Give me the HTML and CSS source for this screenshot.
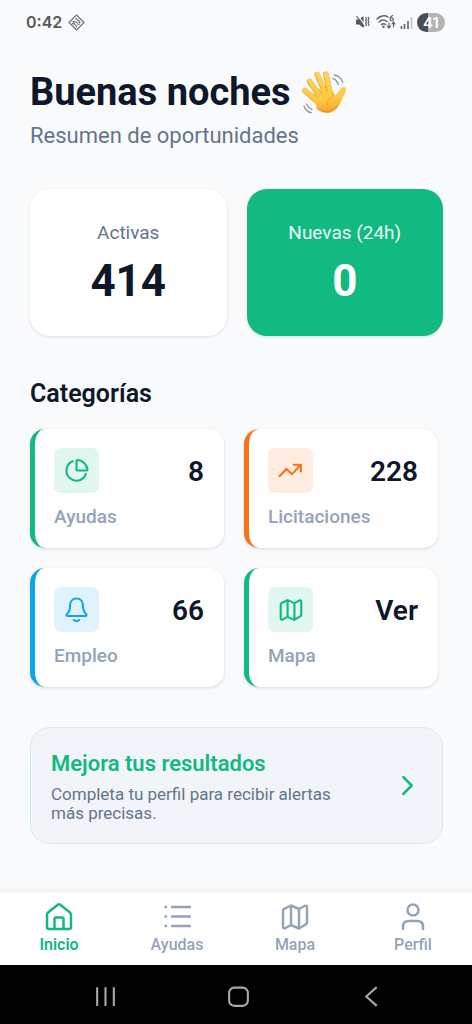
FILE: index.html
```html
<!DOCTYPE html>
<html lang="es">
<head>
<meta charset="utf-8">
<meta name="viewport" content="width=device-width, initial-scale=1">
<title>Resumen de oportunidades</title>
<link rel="stylesheet" href="styles.css">
</head>
<body>
<svg width="0" height="0" class="defs" aria-hidden="true">
  <symbol id="map" viewBox="0 0 28 28"><path d="M2 7.500q0-1 1-1.600L10 2.500l8 3.500 5.500-3Q26 2 26 4.500v15q0 1.200-1 1.700L18 25.500 10 22l-5.500 3Q2 26 2 23.500ZM10 2.500V22M18 6v19.500"/></symbol>
</svg>
<div class="screen">
  <header class="status">
    <span class="clock">0:42</span>
    <svg class="status-diamond" viewBox="0 0 17 17" aria-hidden="true"><path d="M8.500 1 16 8.500 8.500 16 1 8.500Z" fill="none" stroke="#747678" stroke-width="1.200" stroke-linejoin="round"/><path d="M8 4.500 9.500 6M5 7.500l2 .5M10.500 6.500 12 8.500M4.500 9.500 6.500 10M8 8l1.500 1M7.500 11l1 2M10 10.500l1.500-.5" stroke="#747678" stroke-width="1.300" stroke-linecap="round"/></svg>
    <div class="status-right">
      <svg class="mute" viewBox="0 0 14 14" aria-hidden="true"><path d="M.5 4.500h3L8 1v12L3.500 9.500h-3Z" fill="#58595b"/><path d="M2 0 9.500 10.500" stroke="#f8fafc" stroke-width="1.200"/><path d="m1 1 7.500 10.500M10 2l1 1.500-1 1.500 1 1.500-1 1.500 1 1.500-1 1.500M12.500 2l1 1.500-1 1.500 1 1.500-1 1.500 1 1.500-1 1.500" fill="none" stroke="#58595b" stroke-width="1.100"/></svg>
      <svg class="wifi" viewBox="0 0 20 16" aria-hidden="true"><g fill="none" stroke="#606163" stroke-width="1.500" stroke-linecap="round"><path d="M1 5C4 1.500 9 1 12 3M3 8c2.500-2.500 5.500-2.500 8-.5M5.500 10.500c1.300-1 2.800-1 4 0"/><path d="M16.500 1.500C14.500 2.500 14 4 14.300 5.300a1.500 1.500 0 1 0 1.200-1.500M13 9v4.500M11.500 12l1.500 2 1.500-2M17.500 13V8.500M16 10l1.500-2L19 10" stroke-width="1.200"/></g><circle cx="7.500" cy="12.700" r="1.200" fill="#606163"/></svg>
      <svg class="signal" viewBox="0 0 13 13" aria-hidden="true"><path d="M1.500 13v-3M4.500 13V8M8 13V5" stroke="#606163" stroke-width="1.600"/><path d="M11.500 13V1" stroke="#bfc1c4" stroke-width="1.600"/></svg>
      <span class="battery">41</span>
    </div>
  </header>

  <main class="content">
    <h1 class="title">Buenas noches
      <svg class="wave" viewBox="33 30 138 135" role="img" aria-label="Mano saludando">
        <defs><linearGradient id="skin" gradientUnits="userSpaceOnUse" x1="95" y1="35" x2="112" y2="160"><stop offset="0" stop-color="#ffd160"/><stop offset="0.650" stop-color="#ffca42"/><stop offset="1" stop-color="#f0a22d"/></linearGradient></defs>
        <g stroke-linecap="round" fill="none">
          <path d="M45 92 84 126M59 65l33 47M82 44l26 60M108 43l13 62" stroke="#eba730" stroke-width="17"/>
          <path d="M45 91 84 124M60 64l33 46M83 43l26 59M109 42l13 61" stroke="url(#skin)" stroke-width="14"/>
        </g>
        <path d="M70 112C78 98 95 86 112 84q14-2 18 10c2 10 6 15 10 8l12-16q6-8 13-4 6 4 2 12l-13 28c-6 16-16 28-28 34-18 8-36 0-46-14Z" fill="url(#skin)"/>
        <path d="m72 104 13 9M86 86l11 16M106 80l6 14M127 98c8 12-3 14-11 20q-7 7-5 17" fill="none" stroke="#e79b28" stroke-width="2.500" stroke-linecap="round"/>
        <path d="M78 144c22 20 48 12 63-7" fill="none" stroke="#e5942b" stroke-width="3" stroke-linecap="round"/>
        <path d="M129 55q13 6 16 19M133 45q20 4 25 22M49 132q6 12 17 17M42 138q6 18 22 20" fill="none" stroke="#8b9aa3" stroke-width="4" stroke-linecap="round"/>
      </svg>
    </h1>
    <p class="subtitle">Resumen de oportunidades</p>

    <section class="stats" aria-label="Resumen">
      <div class="stat"><span class="stat-label">Activas</span><strong class="stat-value">414</strong></div>
      <div class="stat stat-green"><span class="stat-label">Nuevas (24h)</span><strong class="stat-value">0</strong></div>
    </section>

    <h2 class="section-title">Categorías</h2>
    <section class="categories">
      <a class="card green" href="#ayudas">
        <span class="card-top"><span class="tile"><svg class="icon" viewBox="0 0 24 24"><path d="M8.500 3.200A9.600 9.600 0 1 0 21 15.300"/><path d="M12.800 2a.8.800 0 0 0-.8.800v8.400a.8.800 0 0 0 .8.800h8.900a.8.800 0 0 0 .8-.9A10 10 0 0 0 12.800 2Z"/></svg></span><strong class="card-value">8</strong></span>
        <span class="card-label">Ayudas</span>
      </a>
      <a class="card orange" href="#licitaciones">
        <span class="card-top"><span class="tile"><svg class="icon" viewBox="0 0 24 24"><path d="m1.500 17.500 6.500-7 5.500 5L21.500 7M15 6.500h7v6.500"/></svg></span><strong class="card-value">228</strong></span>
        <span class="card-label">Licitaciones</span>
      </a>
      <a class="card blue" href="#empleo">
        <span class="card-top"><span class="tile"><svg class="icon" viewBox="0 0 24 24"><path d="M12 1.500c-4 0-6.200 3-6.200 6.500 0 5-1.300 7-3 8.500-.8.800-.3 1.800.7 1.800h17c1 0 1.500-1 .7-1.800-1.700-1.500-3-3.500-3-8.500 0-3.500-2.200-6.500-6.200-6.500ZM9.500 22q2.500 2.200 5 0"/></svg></span><strong class="card-value">66</strong></span>
        <span class="card-label">Empleo</span>
      </a>
      <a class="card green" href="#mapa">
        <span class="card-top"><span class="tile"><svg class="icon icon-map"><use href="#map"/></svg></span><strong class="card-value">Ver</strong></span>
        <span class="card-label">Mapa</span>
      </a>
    </section>

    <a class="promo" href="#perfil">
      <span class="promo-text"><strong class="promo-title">Mejora tus resultados</strong><span class="promo-body">Completa tu perfil para recibir alertas más precisas.</span></span>
      <svg class="chevron" viewBox="0 0 24 24" aria-hidden="true"><path d="m8 4 8 8-8 8"/></svg>
    </a>
  </main>

  <nav class="tabs">
    <a class="tab active" href="#inicio"><svg class="tab-icon" viewBox="0 0 28 28"><path d="M2 12q0-1.500 1-2.400L12.500 2q1.500-1.200 3 0L25 9.600q1 .9 1 2.400V24q0 2-2 2H4q-2 0-2-2ZM9.500 25.500V16q0-1.500 1.500-1.500h6q1.500 0 1.500 1.500v9.500"/></svg><span>Inicio</span></a>
    <a class="tab" href="#ayudas"><svg class="tab-icon" viewBox="0 0 28 28"><path d="M9 4h18M9 13.500h18M9 23h18M2.500 4h.5M2.500 13.500h.5M2.500 23h.5"/></svg><span>Ayudas</span></a>
    <a class="tab" href="#mapa"><svg class="tab-icon"><use href="#map"/></svg><span>Mapa</span></a>
    <a class="tab" href="#perfil"><svg class="tab-icon" viewBox="0 0 28 28"><circle cx="14" cy="7" r="5.500"/><path d="M4 26v-2.500q0-5.500 5.500-5.500h9q5.500 0 5.500 5.500V26"/></svg><span>Perfil</span></a>
  </nav>

  <footer class="system">
    <button class="sys" type="button" aria-label="Recientes"><svg viewBox="0 0 24 24"><path d="M4 3v18M12 3v18M20 3v18"/></svg></button>
    <button class="sys" type="button" aria-label="Inicio"><svg viewBox="0 0 24 24"><rect x="3" y="3.500" width="18" height="17.500" rx="5"/></svg></button>
    <button class="sys" type="button" aria-label="Atrás"><svg viewBox="0 0 24 24"><path d="M17 3 7 12l10 9"/></svg></button>
  </footer>
</div>
</body>
</html>
```
FILE: styles.css
```css
* { box-sizing: border-box; }
body { margin: 0; background: #f8fafc; color: #0f172a; font-family: Roboto, "Liberation Sans", sans-serif; }
a { color: inherit; text-decoration: none; }
h1, h2, p { margin: 0; }
svg { display: block; fill: none; }
.defs { display: none; }
.screen { display: flex; flex-direction: column; min-height: 100vh; }

.status { display: flex; align-items: center; gap: 6px; height: 44px; padding: 0 27px 0 26px; color: #58595b; }
.clock { font: 600 16px/20px Inter, sans-serif; }
.status-diamond { width: 17px; height: 17px; }
.status-right { display: flex; align-items: center; gap: 4px; margin-left: auto; }
.mute { width: 15px; height: 14px; margin-right: 2px; }
.wifi { width: 20px; height: 16px; }
.signal { width: 13px; height: 13px; }
.battery { width: 28px; border-radius: 10px; background: linear-gradient(90deg, #4b4c4e 41%, #b3b4b6 41%); color: #fff; font: 600 15px/19px Inter, sans-serif; text-align: center; }

.content { flex: 1; padding: 24px 29px 32px 30px; }
.title { display: flex; align-items: center; gap: 10px; font-size: 38px; line-height: 48px; font-weight: 700; }
.wave { width: 46px; height: 45px; }
.subtitle { margin-top: 6px; color: #64748b; font-size: 22px; line-height: 28px; }

.stats { display: grid; grid-template-columns: 1fr 1fr; gap: 20px; margin-top: 39px; }
.stat { display: flex; flex-direction: column; align-items: center; gap: 9px; padding: 31px 16px 28px; border-radius: 20px; background: #fff; box-shadow: 0 1px 3px rgba(15, 23, 42, .12); }
.stat-label { color: #64748b; font-size: 19px; line-height: 25px; }
.stat-value { font-size: 44px; line-height: 54px; font-weight: 700; }
.stat-green { background: #12b981; color: #fff; }
.stat-green .stat-label { color: #e9faf4; }

.section-title { margin-top: 42px; font-size: 25px; line-height: 32px; font-weight: 600; }
.categories { display: grid; grid-template-columns: 1fr 1fr; gap: 20px; margin-top: 19px; padding-right: 5px; }
.card { display: flex; flex-direction: column; gap: 12px; padding: 19px 20px 19px 19px; border-left: 5px solid var(--accent); border-radius: 15px; background: #fff; box-shadow: 0 1px 3px rgba(15, 23, 42, .14); }
.green { --accent: #12b981; --tint: #e0f6ee; }
.orange { --accent: #f97316; --tint: #feece1; }
.blue { --accent: #0ea5e9; --tint: #e0f3fc; }
.card-top { display: flex; align-items: center; justify-content: space-between; }
.tile { display: grid; place-items: center; width: 45px; height: 45px; border-radius: 7px; background: var(--tint); }
.icon { width: 25px; height: 25px; stroke: var(--accent); stroke-width: 2; stroke-linecap: round; stroke-linejoin: round; }
.icon-map { width: 24px; height: 24px; stroke-width: 2.500; }
.card-value { padding-top: 2px; font-size: 28px; line-height: 36px; font-weight: 600; }
.card-label { color: #94a3b8; font-size: 19px; line-height: 24px; font-weight: 500; }

.promo { display: flex; align-items: center; justify-content: space-between; margin-top: 40px; padding: 20px 22px 20px 20px; border: 1px solid #d0efe5; border-radius: 20px; background: #f1f5f9; }
.promo-text { display: flex; flex-direction: column; gap: 5px; max-width: 290px; }
.promo-title { color: #12b981; font-size: 22px; line-height: 32px; font-weight: 600; }
.promo-body { color: #64748b; font-size: 17px; line-height: 19px; }
.chevron { width: 25px; height: 25px; stroke: #12b981; stroke-width: 2.500; stroke-linecap: round; stroke-linejoin: round; }

.tabs { display: grid; grid-template-columns: repeat(4, 1fr); padding: 11px 0 10px; background: #fff; border-top: 1px solid #f1f5f9; box-shadow: 0 -1px 3px rgba(15, 23, 42, .04); }
.tab { display: flex; flex-direction: column; align-items: center; gap: 4px; color: #94a3b8; font-size: 16px; line-height: 20px; font-weight: 500; }
.tab-icon { width: 28px; height: 28px; stroke: currentColor; stroke-width: 2.500; stroke-linecap: round; stroke-linejoin: round; }
.active { color: #12b981; font-weight: 600; }

.system { display: flex; justify-content: center; gap: 108px; height: 59px; padding: 3px 0 0 4px; background: #000; }
.sys { display: grid; place-items: center; width: 25px; padding: 0; border: 0; background: none; }
.sys svg { width: 25px; height: 25px; stroke: #a9a9a9; stroke-width: 2; }
```
